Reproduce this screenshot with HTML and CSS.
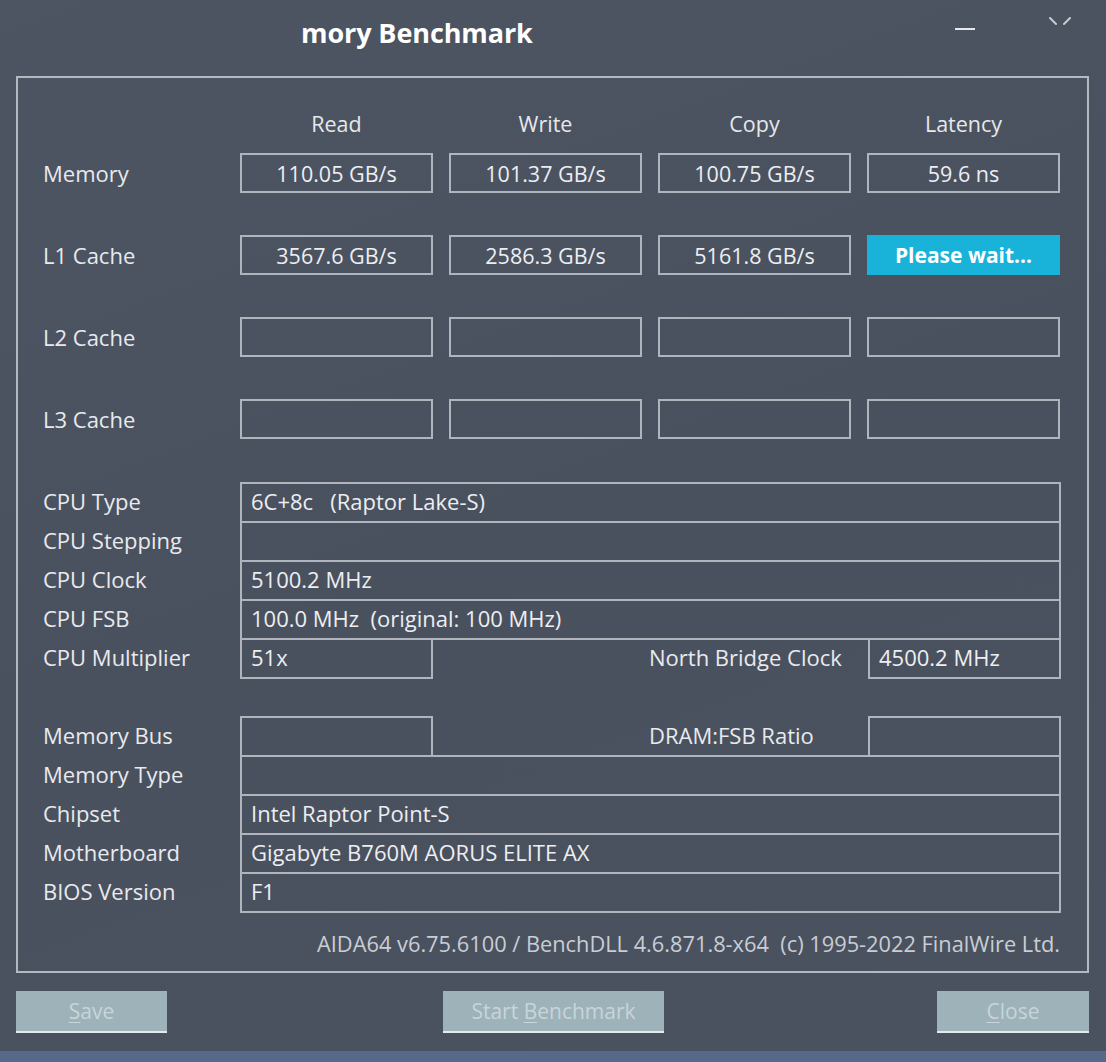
FILE: index.html
```html
<!DOCTYPE html>
<html>
<head>
<meta charset="utf-8">
<title>Memory Benchmark</title>
<link rel="stylesheet" href="styles.css">
</head>
<body>
<div class="window">
  <header class="titlebar">
    <div class="title">mory Benchmark</div>
    <div class="controls">
      <span class="minimize"></span>
      <svg class="close-x" width="22" height="14" viewBox="0 0 22 14">
        <path d="M1 1 L7 7 M21 1 L15 7" stroke="#e6e8ec" stroke-width="2" stroke-linecap="round" fill="none"/>
      </svg>
    </div>
  </header>

  <section class="panel">
    <div class="bench">
      <div class="bench-row head">
        <span></span>
        <span class="col-head">Read</span>
        <span class="col-head">Write</span>
        <span class="col-head">Copy</span>
        <span class="col-head">Latency</span>
      </div>
      <div class="bench-row">
        <span class="label">Memory</span>
        <span class="cell">110.05 GB/s</span>
        <span class="cell">101.37 GB/s</span>
        <span class="cell">100.75 GB/s</span>
        <span class="cell">59.6 ns</span>
      </div>
      <div class="bench-row">
        <span class="label">L1 Cache</span>
        <span class="cell">3567.6 GB/s</span>
        <span class="cell">2586.3 GB/s</span>
        <span class="cell">5161.8 GB/s</span>
        <span class="cell wait">Please wait...</span>
      </div>
      <div class="bench-row">
        <span class="label">L2 Cache</span>
        <span class="cell"></span>
        <span class="cell"></span>
        <span class="cell"></span>
        <span class="cell"></span>
      </div>
      <div class="bench-row">
        <span class="label">L3 Cache</span>
        <span class="cell"></span>
        <span class="cell"></span>
        <span class="cell"></span>
        <span class="cell"></span>
      </div>
    </div>

    <div class="info">
      <div class="info-row">
        <span class="label">CPU Type</span>
        <span class="field">6C+8c&nbsp;&nbsp; (Raptor Lake-S)</span>
      </div>
      <div class="info-row">
        <span class="label">CPU Stepping</span>
        <span class="field"></span>
      </div>
      <div class="info-row">
        <span class="label">CPU Clock</span>
        <span class="field">5100.2 MHz</span>
      </div>
      <div class="info-row">
        <span class="label">CPU FSB</span>
        <span class="field">100.0 MHz&nbsp; (original: 100 MHz)</span>
      </div>
      <div class="info-row split">
        <span class="label">CPU Multiplier</span>
        <span class="field short">51x</span>
        <span class="mid-label">North Bridge Clock</span>
        <span class="field short">4500.2 MHz</span>
      </div>
    </div>

    <div class="info second">
      <div class="info-row split">
        <span class="label">Memory Bus</span>
        <span class="field short"></span>
        <span class="mid-label">DRAM:FSB Ratio</span>
        <span class="field short"></span>
      </div>
      <div class="info-row">
        <span class="label">Memory Type</span>
        <span class="field"></span>
      </div>
      <div class="info-row">
        <span class="label">Chipset</span>
        <span class="field">Intel Raptor Point-S</span>
      </div>
      <div class="info-row">
        <span class="label">Motherboard</span>
        <span class="field">Gigabyte B760M AORUS ELITE AX</span>
      </div>
      <div class="info-row">
        <span class="label">BIOS Version</span>
        <span class="field">F1</span>
      </div>
    </div>

    <div class="credits">AIDA64 v6.75.6100 / BenchDLL 4.6.871.8-x64&nbsp; (c) 1995-2022 FinalWire Ltd.</div>
  </section>

  <footer class="buttons">
    <button class="btn save"><u>S</u>ave</button>
    <button class="btn start">Start <u>B</u>enchmark</button>
    <button class="btn close"><u>C</u>lose</button>
  </footer>
  <div class="taskstrip"></div>
</div>
</body>
</html>
```

FILE: styles.css
```css
html, body {
  margin: 0;
  padding: 0;
  width: 1106px;
  height: 1062px;
  overflow: hidden;
}

body {
  background: #4a515e;
  font-family: "Open Sans", "Noto Sans", sans-serif;
  color: #e6e8ec;
}

.window {
  display: flex;
  flex-direction: column;
  height: 1062px;
  background: linear-gradient(160deg, #4d5462 0%, #4a515e 50%, #4b525f 100%);
}

.titlebar {
  height: 76px;
  display: flex;
  align-items: flex-start;
  flex-shrink: 0;
}

.title {
  padding-left: 301px;
  padding-top: 14px;
  font-size: 27px;
  font-weight: 700;
  color: #ffffff;
  letter-spacing: -0.1px;
}

.controls {
  margin-left: auto;
  display: flex;
  align-items: flex-start;
  gap: 74px;
  padding-right: 35px;
  padding-top: 17px;
}

.minimize {
  display: block;
  width: 20px;
  height: 2px;
  margin-top: 11px;
  background: #e6e8ec;
}

.close-x {
  display: block;
  opacity: 0.8;
}

.panel {
  margin: 0 17px 0 16px;
  height: 863px;
  border: 2px solid #b4b8c0;
  padding: 30px 26px 0 25px;
  box-sizing: content-box;
  display: flex;
  flex-direction: column;
  flex-shrink: 0;
}

.bench {
  display: flex;
  flex-direction: column;
  gap: 42px;
}

.bench-row {
  display: grid;
  grid-template-columns: 181px repeat(4, 193px);
  column-gap: 16px;
  align-items: center;
  height: 40px;
}

.bench-row.head {
  height: 30px;
  margin-bottom: -27px;
}

.col-head {
  text-align: center;
  font-size: 21.5px;
  color: #e6e8ec;
}

.label {
  font-size: 22px;
  color: #e8eaee;
  white-space: nowrap;
}

.cell {
  box-sizing: border-box;
  height: 40px;
  border: 2px solid #b0b4bc;
  display: flex;
  align-items: center;
  justify-content: center;
  font-size: 21.5px;
  color: #eceef2;
}

.cell.wait {
  background: #19b2d9;
  border-color: #19b2d9;
  color: #ffffff;
  font-weight: 700;
  font-size: 21px;
}

.info {
  margin-top: 43px;
  display: flex;
  flex-direction: column;
}

.info.second {
  margin-top: 39px;
}

.info-row {
  display: grid;
  grid-template-columns: 197px 1fr;
  height: 39px;
  align-items: center;
}

.info-row.split {
  grid-template-columns: 197px 193px 1fr 193px;
}

.info-row .label,
.mid-label {
  padding-bottom: 3px;
}

.field {
  box-sizing: border-box;
  height: 41px;
  align-self: start;
  border: 2px solid #b0b4bc;
  display: flex;
  align-items: center;
  padding-left: 9px;
  padding-bottom: 3px;
  font-size: 22px;
  color: #eceef2;
  white-space: nowrap;
}

.mid-label {
  padding-left: 216px;
  font-size: 22px;
  color: #e8eaee;
  white-space: nowrap;
}

.credits {
  margin-top: 18px;
  text-align: right;
  font-size: 21.8px;
  color: #c9cdd4;
  padding-right: 1px;
}

.buttons {
  display: flex;
  padding: 18px 17px 0 16px;
  height: 60px;
  align-items: flex-start;
  flex-shrink: 0;
}

.btn {
  height: 42px;
  border: none;
  border-bottom: 2px solid #e2eaee;
  background: #9db2b9;
  color: #c8d5da;
  font-family: "Open Sans", "Noto Sans", sans-serif;
  font-size: 21px;
  padding: 0;
}

.btn u {
  text-decoration-thickness: 1px;
  text-underline-offset: 3px;
}

.save { width: 151px; }
.start { width: 221px; margin-left: 276px; }
.close { width: 152px; margin-left: auto; }

.taskstrip {
  flex: 1;
  background: #58688a;
}
```
